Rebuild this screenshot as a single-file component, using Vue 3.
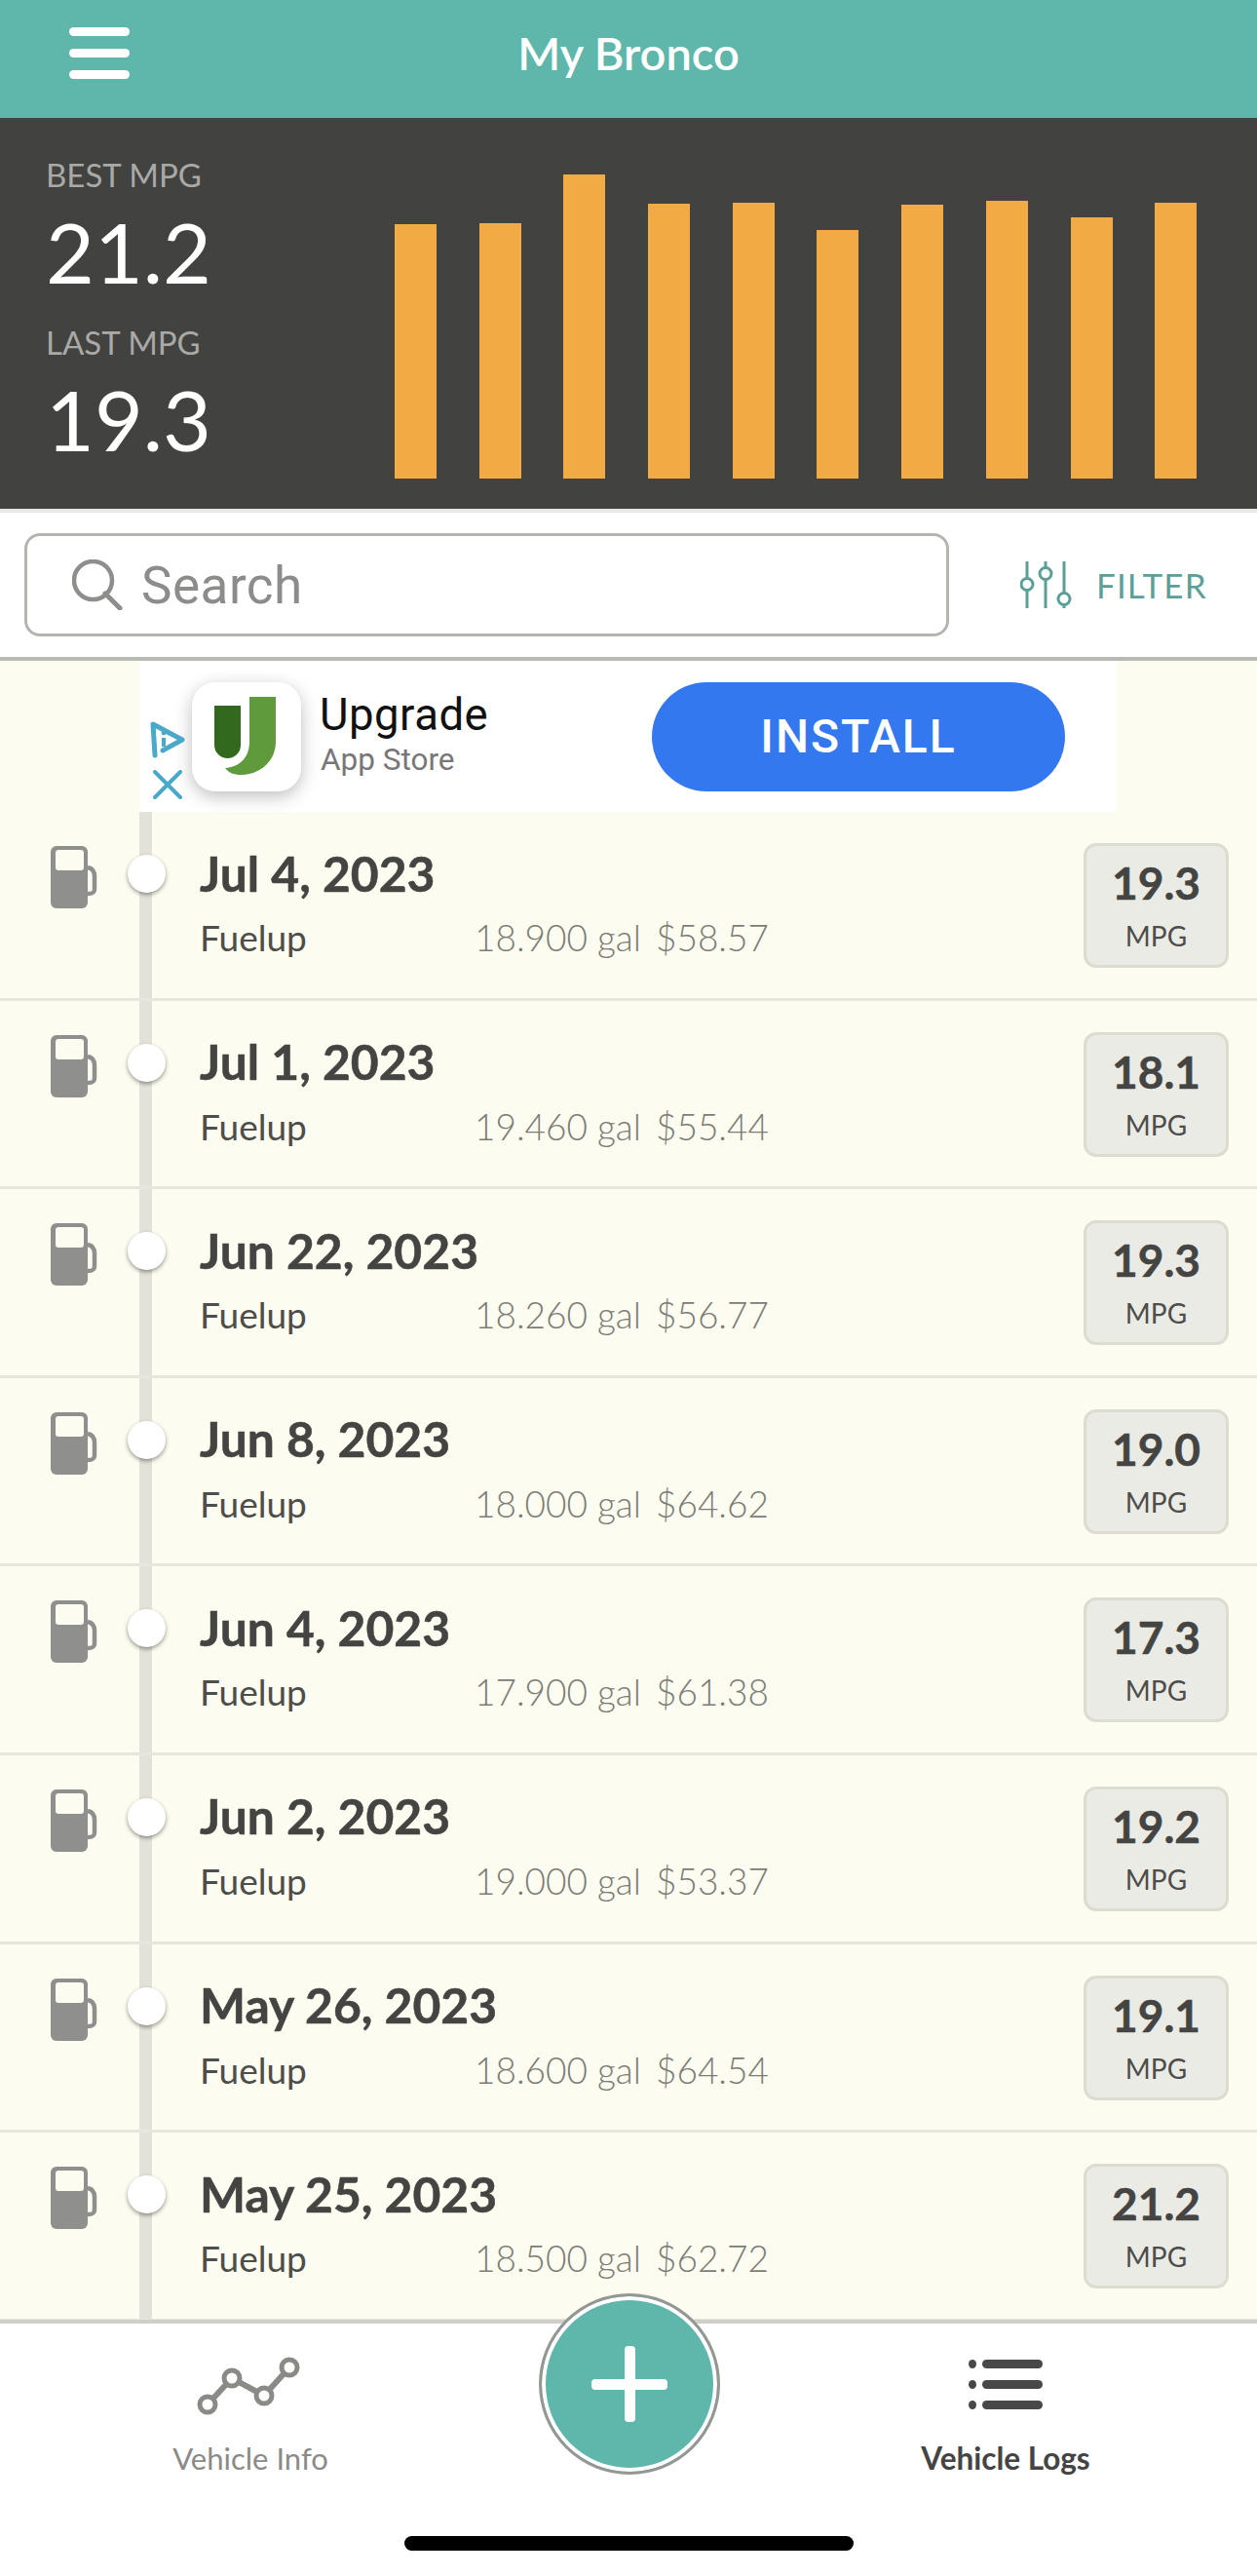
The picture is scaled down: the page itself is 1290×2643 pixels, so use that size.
<template>
  <div class="phone">
    <header class="topbar">
      <div class="burger"><span></span><span></span><span></span></div>
      <div class="title">My Bronco</div>
    </header>

    <section class="stats">
      <div class="stat-col">
        <div class="stat-label">BEST MPG</div>
        <div class="stat-value">21.2</div>
        <div class="stat-label second">LAST MPG</div>
        <div class="stat-value">19.3</div>
      </div>
      <div class="chart">
        <div v-for="(h, i) in bars" :key="i" class="bar" :style="{ height: h + 'px' }"></div>
      </div>
    </section>

    <section class="searchbar">
      <div class="search">
        <svg class="search-icon" viewBox="0 0 52 52" width="52" height="52">
          <circle cx="21.5" cy="21.5" r="19.5" fill="none" stroke="#8e8e8c" stroke-width="4.5" />
          <path d="M34 35 L49 50" stroke="#8e8e8c" stroke-width="5" stroke-linecap="round" />
        </svg>
        <span class="search-text">Search</span>
      </div>
      <div class="filter">
        <svg viewBox="0 0 53 50" width="53" height="50">
          <g fill="none" stroke="#5c9f96" stroke-width="3">
            <path d="M7 1V18M7 31V49M26 1V7M26 20V49M45 1V33M45 46V49" />
            <circle cx="7" cy="24.5" r="6" />
            <circle cx="26" cy="13.5" r="6" />
            <circle cx="45" cy="39.5" r="6" />
          </g>
        </svg>
        <span>FILTER</span>
      </div>
    </section>

    <main class="logs">
      <div class="ad">
        <div class="ad-marks">
          <svg viewBox="0 0 36 38" width="36" height="38">
            <path d="M5 35 L3 3 L33 19 L13 30" fill="none" stroke="#4aa9c8" stroke-width="5" stroke-linejoin="round" stroke-linecap="round" />
            <path d="M14 17V26" stroke="#4aa9c8" stroke-width="4" />
            <circle cx="14" cy="12" r="2.4" fill="#4aa9c8" />
          </svg>
          <svg viewBox="0 0 30 30" width="30" height="30">
            <path d="M2 2 L28 28 M28 2 L2 28" stroke="#4aa9c8" stroke-width="4" stroke-linecap="round" />
          </svg>
        </div>
        <div class="app-icon">
          <svg viewBox="0 0 64 82" width="64" height="82">
            <path d="M0 9H27V49.5A13.5 13.5 0 0 1 0 49.5Z" fill="#33691f" />
            <path d="M36 0H63V46C63 66 47 80 27 80C20 80 15 78 11 73C26 72 36 62 36 46Z" fill="#5f9a3d" />
          </svg>
        </div>
        <div class="ad-text">
          <div class="ad-name">Upgrade</div>
          <div class="ad-store">App Store</div>
        </div>
        <div class="install">INSTALL</div>
      </div>

      <div class="rows">
        <div class="rail"></div>
        <article v-for="row in logs" :key="row.date" class="row">
          <svg class="pump" viewBox="0 0 48 64" width="48" height="64">
            <rect x="0" y="0" width="38" height="64" rx="6" fill="#8f8f8d" />
            <rect x="5" y="4" width="29" height="21" rx="3" fill="#fcfcf0" />
            <path d="M38 22C43 23 45 27 45 31V44C45 48 43 49 38 49" fill="none" stroke="#8f8f8d" stroke-width="4.5" />
          </svg>
          <div class="dot"></div>
          <div class="row-main">
            <div class="row-date">{{ row.date }}</div>
            <div class="row-sub">
              <span class="row-type">Fuelup</span>
              <span class="row-gal">{{ row.gal }} gal</span>
              <span class="row-cost">{{ row.cost }}</span>
            </div>
          </div>
          <div class="mpg">
            <div class="mpg-value">{{ row.mpg }}</div>
            <div class="mpg-label">MPG</div>
          </div>
        </article>
      </div>
    </main>

    <footer class="tabbar">
      <div class="tab">
        <svg viewBox="0 0 110 64" width="110" height="64">
          <path d="M11 51L36 24L69 42L95 13" fill="none" stroke="#8a8b87" stroke-width="6" />
          <g fill="#fff" stroke="#8a8b87" stroke-width="5">
            <circle cx="11" cy="51" r="8" />
            <circle cx="36" cy="24" r="8" />
            <circle cx="69" cy="42" r="8" />
            <circle cx="95" cy="13" r="8" />
          </g>
        </svg>
        <span class="tab-label">Vehicle Info</span>
      </div>
      <div class="tab active">
        <div class="list-icon">
          <div v-for="n in 3" :key="n" class="list-line"><i></i><b></b></div>
        </div>
        <span class="tab-label">Vehicle Logs</span>
      </div>
      <div class="fab"><span class="plus-h"></span><span class="plus-v"></span></div>
      <div class="home-bar"></div>
    </footer>
  </div>
</template>

<script setup>
const bars = [261, 262, 312, 282, 283, 255, 281, 285, 268, 283]

const logs = [
  { date: 'Jul 4, 2023', gal: '18.900', cost: '$58.57', mpg: '19.3' },
  { date: 'Jul 1, 2023', gal: '19.460', cost: '$55.44', mpg: '18.1' },
  { date: 'Jun 22, 2023', gal: '18.260', cost: '$56.77', mpg: '19.3' },
  { date: 'Jun 8, 2023', gal: '18.000', cost: '$64.62', mpg: '19.0' },
  { date: 'Jun 4, 2023', gal: '17.900', cost: '$61.38', mpg: '17.3' },
  { date: 'Jun 2, 2023', gal: '19.000', cost: '$53.37', mpg: '19.2' },
  { date: 'May 26, 2023', gal: '18.600', cost: '$64.54', mpg: '19.1' },
  { date: 'May 25, 2023', gal: '18.500', cost: '$62.72', mpg: '21.2' }
]
</script>

<style>
html,
body {
  margin: 0;
  background: #fff;
}
</style>

<style scoped>
.phone {
  width: 1290px;
  height: 2643px;
  position: relative;
  overflow: hidden;
  background: #fff;
  font-family: Lato, "Open Sans", sans-serif;
}

.topbar {
  height: 121px;
  background: #5fb6ab;
  position: relative;
  display: flex;
  align-items: center;
  justify-content: center;
}

.burger {
  position: absolute;
  left: 71px;
  top: 28px;
  width: 62px;
  display: flex;
  flex-direction: column;
  gap: 13.5px;
}

.burger span {
  height: 8.5px;
  border-radius: 5px;
  background: #fff;
}

.title {
  color: #fff;
  font-size: 47px;
  font-weight: 600;
  margin-top: -13px;
}

.stats {
  height: 401px;
  background: #424240;
  display: flex;
}

.stat-col {
  width: 405px;
  padding: 38px 0 0 47px;
  box-sizing: border-box;
}

.stat-label {
  color: #a9a9a7;
  font-size: 33px;
  font-weight: 400;
  line-height: 40px;
}

.stat-label.second {
  margin-top: 23px;
}

.stat-value {
  color: #fff;
  font-size: 86px;
  font-weight: 400;
  line-height: 100px;
  margin-top: 9px;
}

.chart {
  display: flex;
  align-items: flex-end;
  gap: 43.7px;
  padding-bottom: 31px;
}

.bar {
  width: 43px;
  background: #f2ab44;
}

.searchbar {
  height: 156px;
  display: flex;
  align-items: center;
  border-top: 4px solid #e8e8e4;
  border-bottom: 4px solid #b9b9b4;
  box-sizing: border-box;
  padding-left: 25px;
}

.search {
  width: 949px;
  height: 106px;
  box-sizing: border-box;
  border: 3px solid #b4b4b0;
  border-radius: 16px;
  display: flex;
  align-items: center;
  padding-left: 46px;
  gap: 19px;
}

.search-text {
  color: #8c8c8a;
  font-family: Roboto, sans-serif;
  font-size: 53px;
  letter-spacing: 0.5px;
  margin-top: 2px;
}

.filter {
  display: flex;
  align-items: center;
  gap: 25px;
  margin-left: 73px;
  color: #5c9f96;
  font-size: 35px;
  letter-spacing: 1.1px;
}

.logs {
  height: 1702px;
  background: #fcfcf0;
  overflow: hidden;
}

.ad {
  height: 155px;
  width: 1002px;
  margin-left: 144px;
  background: #fff;
  position: relative;
  display: flex;
  align-items: center;
}

.ad-marks {
  position: absolute;
  left: 10px;
  top: 62px;
  display: flex;
  flex-direction: column;
  align-items: center;
  gap: 12px;
}

.app-icon {
  margin-left: 53px;
  width: 112px;
  height: 112px;
  border-radius: 24px;
  background: #fff;
  box-shadow: 0 5px 18px rgba(0, 0, 0, 0.26);
  display: flex;
  align-items: center;
  justify-content: center;
}

.app-icon svg {
  margin-left: -2px;
}

.ad-text {
  margin-left: 19px;
  width: 341px;
  align-self: flex-start;
  margin-top: 32px;
}

.ad-name {
  font-family: Roboto, sans-serif;
  color: #111;
  font-size: 45.5px;
  line-height: 48px;
  letter-spacing: 0.5px;
}

.ad-store {
  font-family: Roboto, sans-serif;
  color: #77777a;
  font-size: 31.5px;
  line-height: 36px;
  margin-top: 4px;
  margin-left: 1px;
}

.install {
  width: 424px;
  height: 112px;
  border-radius: 56px;
  background: #3478f0;
  color: #fff;
  font-family: Roboto, sans-serif;
  font-size: 48px;
  font-weight: 500;
  letter-spacing: 2px;
  display: flex;
  align-items: center;
  justify-content: center;
}

.rows {
  position: relative;
}

.rail {
  position: absolute;
  left: 143px;
  top: 0;
  bottom: 0;
  width: 13px;
  background: #e2e2d8;
}

.row {
  height: 193.6px;
  box-sizing: border-box;
  border-bottom: 3px solid #e6e6dc;
  position: relative;
  display: flex;
}

.pump {
  position: absolute;
  left: 52px;
  top: 35px;
}

.dot {
  position: absolute;
  left: 130.5px;
  top: 44px;
  width: 39px;
  height: 39px;
  border-radius: 50%;
  background: #fff;
  box-shadow: 0 2px 4px rgba(0, 0, 0, 0.4);
}

.row-main {
  margin-left: 205px;
  flex: 1;
}

.row-date {
  color: #444442;
  font-size: 49.8px;
  font-weight: 700;
  line-height: 60px;
  margin-top: 32.5px;
  -webkit-text-stroke: 0.5px #444442;
}

.row-sub {
  display: flex;
  font-size: 37px;
  line-height: 44px;
  margin-top: 14.5px;
  color: #4d4d4a;
}

.row-type {
  width: 282px;
}

.row-gal,
.row-cost {
  color: #7d7d76;
  font-weight: 300;
}

.row-cost {
  margin-left: 15px;
}

.mpg {
  position: absolute;
  right: 29px;
  top: 32px;
  width: 149px;
  height: 128px;
  box-sizing: border-box;
  border: 3px solid #dddcd0;
  border-radius: 13px;
  background: #ebebe6;
  text-align: center;
}

.mpg-value {
  color: #444442;
  font-size: 46px;
  font-weight: 700;
  line-height: 54px;
  margin-top: 11px;
  -webkit-text-stroke: 0.5px #444442;
}

.mpg-label {
  color: #4d4d4b;
  font-size: 28px;
  line-height: 34px;
  margin-top: 10px;
}

.tabbar {
  position: relative;
  height: 261px;
  border-top: 4px solid #cfcfc7;
  box-sizing: border-box;
}

.tab {
  position: absolute;
  top: 32px;
  display: flex;
  flex-direction: column;
  align-items: center;
  width: 300px;
}

.tab:nth-child(1) {
  left: 107px;
}

.tab.active {
  left: 882px;
}

.tab-label {
  color: #8a8a88;
  font-size: 31px;
  line-height: 40px;
  margin-top: 22px;
}

.tab.active .tab-label {
  color: #444;
  font-weight: 700;
  font-size: 31.5px;
  margin-top: 26px;
}

.list-icon {
  height: 60px;
  display: flex;
  flex-direction: column;
  justify-content: center;
  gap: 12px;
}

.list-line {
  display: flex;
  align-items: center;
  gap: 6px;
}

.list-line i {
  width: 8px;
  height: 9px;
  border-radius: 50%;
  background: #484848;
}

.list-line b {
  width: 62px;
  height: 9px;
  border-radius: 5px;
  background: #484848;
}

.fab {
  position: absolute;
  left: 552.5px;
  top: -31px;
  width: 186px;
  height: 186px;
  box-sizing: border-box;
  border-radius: 50%;
  background: #5fb6ab;
  border: 3px solid #969693;
  box-shadow: inset 0 0 0 4px #fff;
}

.plus-h,
.plus-v {
  position: absolute;
  background: #fff;
  border-radius: 4px;
}

.plus-h {
  left: 51px;
  top: 85px;
  width: 78px;
  height: 11px;
}

.plus-v {
  left: 85px;
  top: 51px;
  width: 11px;
  height: 78px;
}

.home-bar {
  position: absolute;
  left: 415px;
  top: 218px;
  width: 461px;
  height: 15px;
  border-radius: 8px;
  background: #000;
}
</style>
